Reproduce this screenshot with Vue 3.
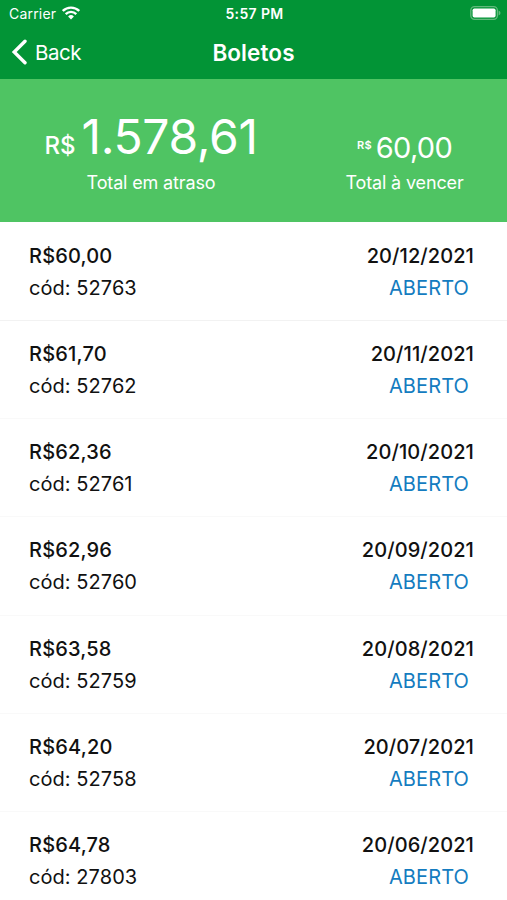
<script setup>
const bills = [
  { value: '60,00', date: '20/12/2021', code: '52763' },
  { value: '61,70', date: '20/11/2021', code: '52762' },
  { value: '62,36', date: '20/10/2021', code: '52761' },
  { value: '62,96', date: '20/09/2021', code: '52760' },
  { value: '63,58', date: '20/08/2021', code: '52759' },
  { value: '64,20', date: '20/07/2021', code: '52758' },
  { value: '64,78', date: '20/06/2021', code: '27803' },
]
</script>

<template>
  <div class="screen">
    <header class="top">
      <div class="status">
        <div class="carrier">
          <span>Carrier</span>
          <svg class="wifi" width="18" height="14" viewBox="0 0 18 14">
            <path d="M.8 5a11.6 11.6 0 0 1 16.4 0M3.7 8.1a7.5 7.5 0 0 1 10.6 0" fill="none" stroke="#fff" stroke-width="2.4" />
            <path d="M9 13.5L6.1 10.5a4.1 4.1 0 0 1 5.8 0z" fill="#fff" />
          </svg>
        </div>
        <span class="clock">5:57 PM</span>
        <svg class="battery" width="31" height="14" viewBox="0 0 31 14">
          <rect x=".8" y=".7" width="26.6" height="12.6" rx="3.8" fill="none" stroke="#62b97c" stroke-width="1.3" />
          <rect x="2.6" y="2.5" width="23" height="9" rx="1.8" fill="#fff" />
          <path d="M28.6 4.6q1.9.8 1.9 2.4t-1.9 2.4z" fill="#62b97c" />
        </svg>
      </div>
      <nav class="nav">
        <div class="back">
          <svg width="16" height="28" viewBox="0 0 16 28">
            <path d="M14 3.2L3.2 14L14 24.8" fill="none" stroke="#fff" stroke-width="3.4" stroke-linecap="round" />
          </svg>
          <span>Back</span>
        </div>
        <h1>Boletos</h1>
        <span></span>
      </nav>
    </header>
    <section class="summary">
      <div class="total late">
        <div class="amount"><small>R$</small><span>1.578,61</span></div>
        <p>Total em atraso</p>
      </div>
      <div class="total due">
        <div class="amount"><small>R$</small><span>60,00</span></div>
        <p>Total à vencer</p>
      </div>
    </section>
    <ul class="list">
      <li v-for="b in bills" :key="b.code">
        <div class="line strong"><span>R${{ b.value }}</span><span class="date">{{ b.date }}</span></div>
        <div class="line"><span>cód: {{ b.code }}</span><span class="open">ABERTO</span></div>
      </li>
    </ul>
  </div>
</template>

<style>
body { margin: 0; background: #fff; }
</style>
<style scoped>
.screen { height: 900px; overflow: hidden; font-family: Inter, "Liberation Sans", sans-serif; color: #111; background: #fff; }
.top { height: 79px; background: #029436; color: #fff; }
.status { display: grid; grid-template-columns: 1fr auto 1fr; align-items: center; height: 27px; padding: 0 6px 0 9px; font-size: 14px; }
.carrier { display: flex; align-items: center; gap: 6px; letter-spacing: .2px; }
.wifi { margin-top: -2px; }
.clock { font-weight: 600; font-size: 14px; letter-spacing: .35px; margin-left: -1px; }
.battery { justify-self: end; margin-top: -1px; }
.nav { display: grid; grid-template-columns: 1fr auto 1fr; align-items: center; height: 50px; padding: 0 11px; }
.back { display: flex; align-items: center; gap: 8px; font-size: 20.5px; letter-spacing: -.45px; }
h1 { margin: 0; font-size: 22.5px; font-weight: 600; letter-spacing: .1px; }
.summary { display: flex; height: 143px; background: #4fc463; color: #fff; }
.total { display: flex; flex-direction: column; align-items: center; }
.total p { margin: 0; font-size: 18px; line-height: 24px; letter-spacing: -.15px; }
.late { width: 302px; }
.due { width: 205px; }
.amount { display: flex; align-items: baseline; height: 92px; box-sizing: border-box; }
.late .amount { gap: 6px; font-size: 48px; line-height: 58px; padding-top: 29px; font-weight: 400; letter-spacing: -.35px; }
.late small { font-size: 24px; font-weight: 500; letter-spacing: 0; }
.due .amount { gap: 4px; font-size: 29px; line-height: 36px; padding-top: 51px; font-weight: 400; letter-spacing: -.7px; }
.due small { font-size: 11px; font-weight: 600; align-self: flex-start; line-height: 30px; letter-spacing: .2px; }
.list { margin: 0; padding: 0; list-style: none; }
li { height: 98.15px; box-sizing: border-box; padding: 18px 33px 0 29px; }
li + li { background: linear-gradient(#f9f9f9, #f9f9f9) 0 0 / 100% 1px no-repeat; }
li:nth-child(2) { background-image: linear-gradient(#f2f2f2, #f2f2f2); }
.line { display: flex; justify-content: space-between; font-size: 20px; line-height: 32px; letter-spacing: .06px; }
.strong { font-weight: 500; letter-spacing: .18px; }
.date { letter-spacing: .08px; }
.open { color: #147cc0; margin-right: 5px; letter-spacing: .12px; }
</style>
